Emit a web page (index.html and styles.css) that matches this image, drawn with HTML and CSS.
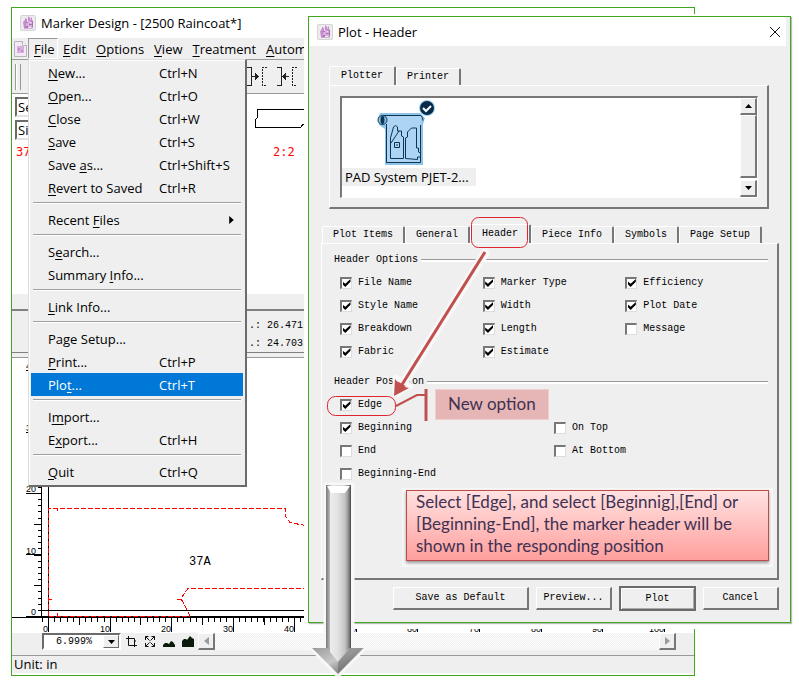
FILE: index.html
```html
<!DOCTYPE html>
<html lang="en">
<head>
<meta charset="utf-8">
<title>Marker Design</title>
<link rel="stylesheet" href="styles.css">
</head>
<body>
<svg class="defs" aria-hidden="true">
  <symbol id="app-icon" viewBox="0 0 16 16">
    <rect width="16" height="16" rx="2" fill="#d4d4d4"/>
    <rect x="1" y="1" width="14" height="14" rx="1" fill="#ececec"/>
    <path d="M4 5h9v9H4z" fill="#d9b0dd"/>
    <path d="M3 7l3-2v9l-2-1zM5 3l2 1v3H5zM8 1l2 2v3H8zM11 2l1 1v4h-2z" fill="#c58bce"/>
    <path d="M6 7h2v1H6zM9 9h3v1H9zM6 11h2v2H6zM12 6h1v6h-1z" fill="#a873b1"/>
    <path d="M7 5h1v2H7zM10 7h1v1h-1zM8 12h3v1H8z" fill="#f4e6f6"/>
  </symbol>
</svg>
<main class="desktop">
  <section class="window" aria-label="Marker Design">
    <header class="titlebar">
      <svg class="icon16"><use href="#app-icon"/></svg>
      <h1>Marker Design - [2500 Raincoat*]</h1>
    </header>
    <nav class="menubar">
      <svg class="doc-icon" viewBox="0 0 13 16"><path d="M.5.5h8l4 4v11H.5z" fill="#f3e9f4" stroke="#b9b4bb"/><path d="M8.500.5v4h4" fill="#fff" stroke="#b9b4bb"/><path d="M3 5h7v7H3z" fill="#d9b0dd"/><path d="M4 7h2v2H4zM7 9h2v2H7z" fill="#c58bce"/></svg>
      <div class="menu-anchor">
        <button class="menu-title open"><u>F</u>ile</button>
        <div class="menu">
          <button><span><u>N</u>ew...</span><span>Ctrl+N</span></button>
          <button><span><u>O</u>pen...</span><span>Ctrl+O</span></button>
          <button><span><u>C</u>lose</span><span>Ctrl+W</span></button>
          <button><span><u>S</u>ave</span><span>Ctrl+S</span></button>
          <button><span>Save <u>a</u>s...</span><span>Ctrl+Shift+S</span></button>
          <button><span><u>R</u>evert to Saved</span><span>Ctrl+R</span></button>
          <hr>
          <button><span>Recent <u>F</u>iles</span><svg class="submenu" viewBox="0 0 4 7"><path d="M0 0l4 3.500L0 7z"/></svg></button>
          <hr>
          <button><span>S<u>e</u>arch...</span></button>
          <button><span>Summary <u>I</u>nfo...</span></button>
          <hr>
          <button><span><u>L</u>ink Info...</span></button>
          <hr>
          <button><span>Pa<u>g</u>e Setup...</span></button>
          <button><span><u>P</u>rint...</span><span>Ctrl+P</span></button>
          <button class="selected"><span>Plo<u>t</u>...</span><span>Ctrl+T</span></button>
          <hr>
          <button><span>I<u>m</u>port...</span></button>
          <button><span>E<u>x</u>port...</span><span>Ctrl+H</span></button>
          <hr>
          <button><span><u>Q</u>uit</span><span>Ctrl+Q</span></button>
        </div>
      </div>
      <button class="menu-title"><u>E</u>dit</button>
      <button class="menu-title"><u>O</u>ptions</button>
      <button class="menu-title"><u>V</u>iew</button>
      <button class="menu-title"><u>T</u>reatment</button>
      <button class="menu-title"><u>A</u>utoma</button>
    </nav>
    <div class="toolbar">
      <i class="grip"></i>
      <svg class="tool-icons" width="60" height="20" viewBox="0 0 60 20" fill="none" stroke="#222" shape-rendering="crispEdges">
        <path d="M0 .5h4.500v18H0M5 9.500h4M30 .5h4.500v18H30M38 9.500h4"/>
        <path d="M20 .5h-4.500v18H20M50 .5h-4.500v18H50" stroke-dasharray="2 1"/>
        <path d="M8 6l4 3.500-4 3.500zM39 6l-4 3.500 4 3.500z" fill="#222" stroke="none"/>
      </svg>
    </div>
    <div class="stock">
      <div class="filters">
        <input aria-label="Set" value="Se">
        <input aria-label="Size" value="Si">
        <b>37</b>
      </div>
      <div class="piece">
        <svg width="60" height="22" fill="none" stroke="#000" shape-rendering="crispEdges"><path d="M60 1.500H2V10L.5 12v7H46l2-3h12"/></svg>
        <b>2:2</b>
      </div>
    </div>
    <div class="splitter"></div>
    <div class="readout"><span>.: 26.471'</span><span>.: 24.703</span></div>
    <div class="rule"></div>
    <svg class="canvas" role="img" aria-label="Marker">
      <g transform="translate(-12 -359)" shape-rendering="crispEdges" fill="none" stroke="#000">
        <path d="M41.500 359V618M48.500 359V618M12 618.500h30M38 611.500h270"/>
        <path d="M42 618h270" stroke-width="2"/>
        <path d="M39.500 618V359" stroke-width="3" stroke-dasharray="1 5.150"/>
        <path d="M37.500 618V359" stroke-width="7" stroke-dasharray="1 29.750"/>
        <path d="M26 617.500h15M26 555.500h15M26 494.500h15M26 433.500h15M26 371.500h15"/>
        <path d="M42 620.500H308" stroke-width="4" stroke-dasharray="1 5.150"/>
        <path d="M48 622.500H308" stroke-width="7" stroke-dasharray="1 29.800"/>
        <path d="M48.500 618v15M110.500 618v15M171.500 618v15M233.500 618v15M294.500 618v15M356.500 618v15M417.500 618v15M479.500 618v15M541.500 618v15M602.500 618v15M664.500 618v15"/>
        <g stroke="#f00"><path stroke-dasharray="5 2" d="M48.500 617V509.500H285.500V517l4 6 8 2 11 2M48.500 617H190M308 589.500H188l-7 10 9 17"/><path d="M57.500 509v3M57.500 614v3M177 600.500h4M49 600.500h3"/></g>
      </g>
      <g class="ruler" transform="translate(-12 -359)" text-anchor="end">
        <text x="36" y="370">40</text><text x="36" y="432">30</text><text x="36" y="493">20</text><text x="36" y="555">10</text><text x="36" y="616">0</text>
        <text x="48" y="633">0</text><text x="110" y="633">10</text><text x="171" y="633">20</text><text x="233" y="633">30</text><text x="294" y="633">40</text><text x="356" y="633">50</text><text x="417" y="633">60</text><text x="479" y="633">70</text><text x="541" y="633">80</text><text x="602" y="633">90</text><text x="664" y="633">100</text>
      </g>
      <text class="piece-name" x="177" y="207">37A</text>
    </svg>
    <div class="zoombar">
      <div class="combo"><select aria-label="Zoom"><option>6.999%</option></select><span class="combo-arrow"><svg viewBox="0 0 7 4"><path d="M0 0h7L3.500 4z"/></svg></span></div>
      <svg class="zoom-icons" width="70" height="12" viewBox="0 0 70 12">
        <g fill="none" stroke="#111"><path d="M2.500 0v9.500H11M0 2.500h8.500V11M5 2.500h3M8 5h2"/>
        <path d="M19.500 4V.5h3M19.500.5l4 4M28.500 4V.5h-3M28.500.5l-4 4M19.500 7v3.500h3M19.500 10.500l4-4M28.500 7v3.500h-3M28.500 10.500l-4-4"/></g>
        <path fill="#0b1a0b" d="M37 11V9l2-2h2l2 1 2-3 2 1 2 3v2zM56 11V5l2-2h2l1 1 3-4 2 2 2 1v8z"/>
      </svg>
      <button class="scroll-btn" aria-label="Scroll left"><svg width="5" height="8" viewBox="0 0 5 8"><path d="M5 0v8L0 4z" fill="#999"/></svg></button>
      <div class="track"></div>
      <button class="scroll-btn" aria-label="Scroll right"><svg width="5" height="8" viewBox="0 0 5 8"><path d="M0 0v8l5-4z" fill="#999"/></svg></button>
    </div>
    <footer class="status">Unit: in</footer>
  </section>

  <section class="dialog" role="dialog" aria-label="Plot - Header">
    <header class="titlebar">
      <svg class="icon16"><use href="#app-icon"/></svg>
      <h2>Plot - Header</h2>
      <button class="close" aria-label="Close"><svg width="12" height="12" viewBox="0 0 12 12"><path d="M1 1l10 10M11 1L1 11" stroke="#111" fill="none"/></svg></button>
    </header>
    <div class="dialog-body">
      <div class="device">
        <div class="tabs" role="tablist">
          <button role="tab" class="tab active">Plotter</button>
          <button role="tab" class="tab">Printer</button>
        </div>
        <div class="panel device-panel">
          <div class="listbox">
            <div class="device-item">
              <svg width="60" height="68" viewBox="0 0 60 68">
                <path d="M3 13h40l5 5-2 6v41H8V29l-6-4-1-7z" fill="#8fc4ea"/>
                <path d="M9 16h35v47H9z" fill="#add5f3"/>
                <g fill="none" stroke="#0c3554"><path d="M6 15.500h38q2 2 2 5M9.500 24v38.500h34V25M13.500 58.500V38l3-11q2-3 4 0v4h4v5l2 1v21.500zM28.500 58.500V38l2-1v-5l4-4h5v20h2v4l2 1v4h-3v2.500z"/><path d="M14 43l8-12"/><path d="M17.500 42.500h5v5h-5zM19 45h2"/><circle cx="5.500" cy="20" r="4.500"/></g>
                <ellipse cx="5.500" cy="20" rx="2" ry="4" fill="#0c3554"/>
                <circle cx="50" cy="8" r="8" fill="#9fd0f2"/><circle cx="50" cy="8" r="7" fill="#062b48"/>
                <path d="M46 8l3 3 5-5" fill="none" stroke="#fff" stroke-width="2"/>
              </svg>
              <span>PAD System PJET-2...</span>
            </div>
            <div class="vscroll">
              <button aria-label="Scroll up"><svg width="7" height="4" viewBox="0 0 7 4"><path d="M0 4h7L3.500 0z"/></svg></button>
              <i class="thumb"></i>
              <button aria-label="Scroll down"><svg width="7" height="4" viewBox="0 0 7 4"><path d="M0 0h7L3.500 4z"/></svg></button>
            </div>
          </div>
        </div>
      </div>
      <div class="settings">
        <div class="tabs" role="tablist">
          <button role="tab" class="tab">Plot Items</button>
          <button role="tab" class="tab">General</button>
          <button role="tab" class="tab active">Header</button>
          <button role="tab" class="tab">Piece Info</button>
          <button role="tab" class="tab">Symbols</button>
          <button role="tab" class="tab">Page Setup</button>
        </div>
        <div class="panel settings-panel">
          <h3>Header Options</h3>
          <div class="checks three">
            <label><input type="checkbox" checked>File Name</label>
            <label><input type="checkbox" checked>Style Name</label>
            <label><input type="checkbox" checked>Breakdown</label>
            <label><input type="checkbox" checked>Fabric</label>
            <label><input type="checkbox" checked>Marker Type</label>
            <label><input type="checkbox" checked>Width</label>
            <label><input type="checkbox" checked>Length</label>
            <label><input type="checkbox" checked>Estimate</label>
            <label><input type="checkbox" checked>Efficiency</label>
            <label><input type="checkbox" checked>Plot Date</label>
            <label><input type="checkbox">Message</label>
          </div>
          <h3>Header Position</h3>
          <div class="checks two">
            <label><input type="checkbox" checked>Edge</label>
            <label><input type="checkbox" checked>Beginning</label>
            <label><input type="checkbox">End</label>
            <label><input type="checkbox">Beginning-End</label>
            <label class="second-row"><input type="checkbox">On Top</label>
            <label><input type="checkbox">At Bottom</label>
          </div>
        </div>
      </div>
      <div class="actions">
        <button class="btn wide">Save as Default</button>
        <button class="btn">Preview...</button>
        <button class="btn default">Plot</button>
        <button class="btn">Cancel</button>
      </div>
    </div>
  </section>

  <svg class="markup" aria-hidden="true">
    <defs>
      <linearGradient id="steel"><stop offset="0" stop-color="#777"/><stop offset=".25" stop-color="#e2e2e2"/><stop offset=".7" stop-color="#d6d6d6"/><stop offset=".88" stop-color="#999"/><stop offset="1" stop-color="#4a4a4a"/></linearGradient>
      <linearGradient id="head" x2="1" y2="1"><stop offset="0" stop-color="#9a9a9a"/><stop offset=".45" stop-color="#c8c8c8"/><stop offset="1" stop-color="#444"/></linearGradient>
      <linearGradient id="core"><stop offset="0" stop-color="#ececec"/><stop offset=".5" stop-color="#e2e2e2"/><stop offset="1" stop-color="#c4c4c4"/></linearGradient>
    </defs>
    <g fill="none" stroke="#e0232e"><rect x="471.500" y="217.500" width="56" height="30" rx="7"/><rect x="327.500" y="396.500" width="68" height="19" rx="8"/></g>
    <g fill="none" stroke="#f9f7f7" stroke-width="9" stroke-linecap="round"><path d="M485 253L397 393"/></g>
    <path d="M395 377v18l16-9z" fill="#c0504d" stroke="#f9f7f7" stroke-width="5" stroke-linejoin="round"/>
    <g fill="none" stroke="#c0504d"><path d="M485 252L398 391" stroke-width="3"/><path d="M406 406" /><path d="M396 406l21-11h9" stroke-width="2"/><path d="M426 389v32" stroke-width="3"/></g>
    <path d="M395 379l-1 17 15-8-8-2z" fill="#c0504d"/>
    <path d="M326 485h26v163h12l-26 27-26-27h14z" fill="#fff" stroke="#f8f8f8" stroke-width="5" stroke-linejoin="round"/>
    <path d="M326 485h25v172h-25z" fill="url(#steel)"/>
    <path d="M312 648h15l11 10 12-10h14l-26 26z" fill="url(#head)"/>
    <path d="M330 491h15v162l-7 9-8-10z" fill="url(#core)"/>
    <path d="M327 486h23l-5 7h-14z" fill="#fff"/>
    <path d="M338 662l12-14h13l-25 25z" fill="#666" opacity=".5"/>
  </svg>
  <p class="tag">New option</p>
  <p class="note">Select [Edge], and select [Beginnig],[End] or<br>[Beginning-End], the marker header will be<br>shown in the responding position</p>
</main>
</body>
</html>
```
FILE: styles.css
```css
* { box-sizing: border-box; }
body {
  margin: 0;
  background: #fff;
  color: #000;
  font: 13px/18px "Open Sans", "Noto Sans", sans-serif;
}
h1, h2, h3, p { margin: 0; font: inherit; }
button, input, select { font: inherit; color: inherit; border: 0; border-radius: 0; background: none; padding: 0; margin: 0; }
svg { display: block; flex: none; }
u { text-underline-offset: 2px; }
.defs { position: absolute; width: 0; height: 0; }
.desktop { position: relative; min-height: 100vh; padding: 7px 104px 16px 11px; overflow: hidden; }

/* Main window */
.window { border: 1px solid #3fa720; background: #fff; }
.titlebar { display: flex; align-items: center; gap: 5px; height: 30px; padding-left: 8px; background: #fff; }
.icon16 { width: 16px; height: 16px; }
.menubar { display: flex; align-items: center; height: 22px; padding-left: 2px; background: #efefef; border-bottom: 1px solid #999; white-space: nowrap; }
.doc-icon { width: 13px; height: 16px; margin-right: 1px; }
.menu-anchor { position: relative; }
.menu-title { height: 21px; padding: 0 5px; }
.menu-title.open { width: 30px; border: 1px solid; border-color: #999 #fff #fff #999; }
.menu {
  position: absolute; z-index: 2; top: 100%; left: 0; width: 219px;
  padding: 1px 2px 2px; background: #efefef;
  border: 1px solid #dcdcdc; border-right: 2px solid #6b6b6b; border-bottom: 2px solid #6b6b6b;
  box-shadow: inset 1px 1px #fff;
}
.menu button { display: grid; grid-template-columns: 111px 1fr; align-items: center; width: 100%; height: 23px; padding-left: 17px; text-align: left; }
.menu .selected { background: #0078d7; color: #fff; }
.menu hr { height: 2px; margin: 3px 2px 4px; border: 0; border-top: 1px solid #a0a0a0; background: #fff; }
.submenu { width: 5px; height: 8px; justify-self: end; margin-right: 9px; }
.toolbar { display: flex; align-items: center; height: 34px; padding-left: 3px; background: #efefef; border-bottom: 1px solid #999; }
.grip { width: 6px; height: 26px; border: solid #999; border-width: 0 1px; background: linear-gradient(90deg, #fff 1px, #efefef 1px); }
.tool-icons { margin-left: 226px; }
.stock { display: flex; height: 200px; padding: 3px 0 0 3px; color: #f00; }
.stock b { font: 12px/18px "DejaVu Sans Mono", monospace; }
.filters { display: flex; flex-direction: column; width: 240px; gap: 3px; }
.filters input { width: 120px; height: 20px; padding: 0 1px; color: #000; background: #fff; border: 2px solid; border-color: #6b6b6b #e3e3e3 #e3e3e3 #6b6b6b; }
.filters b { padding-left: 1px; }
.piece { display: flex; flex-direction: column; gap: 13px; padding-top: 11px; }
.piece b { padding-left: 18px; }
.splitter { height: 17px; background: #efefef; border-bottom: 2px solid #808080; }
.readout { display: flex; flex-direction: column; height: 42px; padding: 6px 0 0 237px; background: #efefef; border-bottom: 1px solid #808080; font: 10px/18px "Liberation Mono", monospace; white-space: pre; }
.rule { height: 5px; background: #efefef; border-bottom: 1px solid #999; }
.canvas { width: 100%; height: 275px; background: #fff; }
.ruler { font: 9px "Liberation Sans", sans-serif; }
.piece-name { font: 12px "Liberation Mono", monospace; }
.zoombar { display: flex; align-items: center; height: 17px; padding: 0 18px 0 30px; background: #efefef; }
.combo { display: flex; width: 79px; height: 17px; background: #fff; border: 2px solid; border-color: #6b6b6b #fff #fff #6b6b6b; }
.combo select { flex: 1; min-width: 0; appearance: none; padding-left: 12px; font: 10px/13px "Liberation Mono", monospace; }
.combo-arrow { display: grid; place-items: center; width: 16px; background: #efefef; border: 1px solid; border-color: #fff #6b6b6b #6b6b6b #fff; }
.combo-arrow svg { width: 7px; height: 4px; }
.zoom-icons { margin: 0 2px 0 5px; }
.scroll-btn, .vscroll button { display: grid; place-items: center; width: 17px; height: 17px; background: #efefef; border: solid; border-width: 1px 2px 2px 1px; border-color: #fff #777 #777 #fff; }
.track { flex: 1; height: 17px; background: repeating-conic-gradient(#efefef 0 25%, #fff 0 50%) 0 0 / 2px 2px; }
.status { height: 25px; padding: 5px 2px 0; background: linear-gradient(#efefef 5px, #999 5px, #999 6px, #efefef 6px); border-bottom: 2px solid #fff; }

/* Plot dialog */
.dialog {
  position: absolute; top: 16px; left: 308px; right: 8px;
  border: 1px solid #3fa720; background: #efefef;
  box-shadow: 1px 1px 1px #bbb, 0 2px 0 4px #fff;
  font: 10px/16px "Liberation Mono", monospace;
}
.dialog .titlebar { height: 29px; margin-right: 4px; padding-right: 5px; }
.dialog h2 { font: 13px/18px "Open Sans", sans-serif; }
.close { margin-left: auto; }
.dialog-body { padding: 20px 11px 11px 12px; }
.tabs { display: flex; align-items: flex-end; }
.tab { height: 17px; padding: 0 10px; background: #efefef; border: solid; border-width: 1px 2px 0 1px; border-color: #fff #777 #777 #fff; border-radius: 2px 2px 0 0; }
.tab.active { height: 19px; padding: 0 11px; }
.panel { border: solid; border-width: 1px 2px 2px 1px; border-color: #fff #777 #777 #fff; }
.device { padding: 0 10px 0 8px; }
.device-panel { padding: 10px 9px 9px 10px; }
.listbox { display: flex; justify-content: space-between; height: 102px; background: #fff; border: solid; border-width: 2px 1px 1px 2px; border-color: #777 #fff #fff #777; }
.device-item { display: flex; flex-direction: column; align-items: flex-start; padding-top: 2px; }
.device-item svg { margin-left: 35px; }
.device-item span { padding: 0 7px 0 3px; background: #efefef; font: 13px/18px "Open Sans", sans-serif; }
.vscroll { display: flex; flex-direction: column; width: 17px; }
.thumb { flex: 1; margin-bottom: 2px; background: #efefef; border: solid; border-width: 1px 2px 2px 1px; border-color: #fff #777 #777 #fff; }
.settings { padding-top: 15px; }
.settings .tabs { padding-left: 1px; }
.settings-panel { padding: 8px 9px 93px 12px; }
h3 { display: flex; align-items: center; gap: 3px; }
h3::after { content: ""; flex: 1; height: 2px; border-top: 1px solid #999; background: #fff; }
.checks { display: grid; grid-auto-flow: column; grid-template-rows: repeat(4, 23px); padding: 3px 0 0 6px; }
.checks.three { grid-template-columns: repeat(3, 1fr); padding-bottom: 11px; }
.checks.two { grid-template-columns: repeat(2, 1fr); }
.second-row { grid-row: 2; }
.checks label { display: flex; align-items: center; gap: 6px; }
.checks input { appearance: none; width: 12px; height: 12px; display: grid; place-items: center; background: #fff; border: solid; border-width: 2px 1px 1px 2px; border-color: #777 #ddd #ddd #777; }
.checks input:checked::before { content: ""; width: 8px; height: 8px; background: #000; clip-path: polygon(0 30%, 35% 60%, 100% 0, 100% 35%, 35% 100%, 0 65%); }
.actions { display: flex; justify-content: flex-end; align-items: center; gap: 7px; padding: 6px 0 0; }
.btn { width: 76px; height: 23px; background: #efefef; border: solid; border-width: 1px 2px 2px 1px; border-color: #fff #777 #777 #fff; }
.btn.wide { width: 136px; }
.btn.default { width: 77px; height: 25px; border: 2px solid #6b6b6b; box-shadow: inset 1px 1px #fff, inset -1px -1px #aaa; }

/* Annotations over both windows */
.markup { position: absolute; inset: 0; width: 100%; height: 100%; pointer-events: none; }
.tag, .note { position: absolute; color: #403152; font: 17px/22px Lato, sans-serif; }
.tag { top: 389px; left: 435px; padding: 3px 12px 4px; background: #e6b5b5; border: 1px solid #f0cfcf; }
.note { top: 490px; left: 406px; right: 30px; height: 71px; padding: 0 9px; white-space: nowrap; background: linear-gradient(#ffe2e1, #ff9f9d); border: 1px solid #be4b48; box-shadow: 0 2px 3px #999, 0 2px 0 4px #f7f7f7; }
```
